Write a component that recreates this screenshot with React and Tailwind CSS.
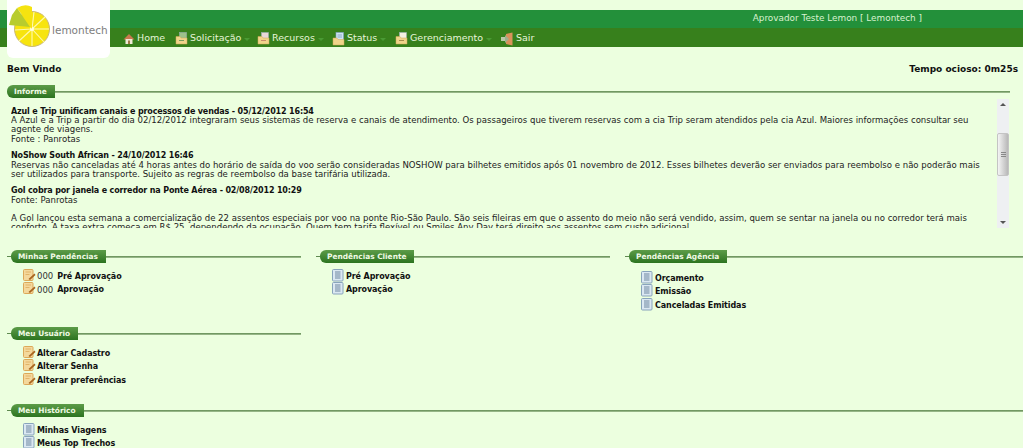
const FONT = 'font-["DejaVu_Sans",Verdana,sans-serif]';

const LemonLogo = () => (
  <svg width="50" height="50" viewBox="0 0 50 50" className="shrink-0">
    <circle cx="25" cy="25" r="17.5" fill="#f7e40e" stroke="#c9b878" strokeWidth="1" />
    <g stroke="#fff9b0" strokeWidth="1.1">
      <path d="M25 25 L27 8" />
      <path d="M25 25 L38 13" />
      <path d="M25 25 L42 25" />
      <path d="M25 25 L37 38" />
      <path d="M25 25 L25 42" />
      <path d="M25 25 L12 37" />
      <path d="M25 25 L8 26" />
    </g>
    <circle cx="25" cy="25" r="2" fill="#fffde0" />
    <path d="M25 25 L10 4 Q18 -1 25 3 Z" fill="#f5e310" />
    <path d="M23 23 L10 4 L5 11 L2 21 Z" fill="#b8cc2e" />
  </svg>
);

const HomeIcon = () => (
  <svg width="12" height="12" viewBox="0 0 12 12">
    <path d="M6 1 L11.5 6.5 H0.5 Z" fill="#c8794e" />
    <rect x="2.5" y="6" width="7" height="5" fill="#efe9d6" />
    <rect x="5" y="7.5" width="2" height="3.5" fill="#a07a48" />
  </svg>
);

const FolderIcon = ({ tab = '#dfe6ee', line = '#7a9a5a' }) => (
  <svg width="13" height="13" viewBox="0 0 13 13">
    <rect x="4.5" y="0.5" width="7" height="6" fill={tab} stroke="#9fb0bc" strokeWidth="0.5" />
    <path d="M1 4.5 H5 L6 6 H12 V12 H1 Z" fill="#f0d48a" stroke="#d3aa55" strokeWidth="0.5" />
    <path d="M4 8.5 L9 8.5" stroke={line} strokeWidth="1" />
  </svg>
);

const StatusIcon = () => (
  <svg width="13" height="14" viewBox="0 0 13 14">
    <rect x="4" y="0.5" width="7.5" height="8" fill="#cfe3f2" stroke="#7fa3c4" strokeWidth="0.6" />
    <path d="M5.5 3 H10 M5.5 5 H10" stroke="#6f93b5" strokeWidth="0.7" />
    <path d="M1 6 H5 L6 7.5 H12 V13 H1 Z" fill="#f0d48a" stroke="#d3aa55" strokeWidth="0.5" />
  </svg>
);

const SairIcon = () => (
  <svg width="14" height="14" viewBox="0 0 14 14">
    <path d="M6 2 L12.5 0.5 V13.5 L6 12 Z" fill="#d9925a" />
    <path d="M1 5 H6 V9 H1 Z" fill="#b9c9a8" />
    <path d="M5 3 L9 7 L5 11 Z" fill="#9db08c" />
  </svg>
);

const NoteIcon = () => (
  <svg width="13" height="13" viewBox="0 0 13 13" className="shrink-0 -mt-[3px]">
    <rect x="0.5" y="0.5" width="9.5" height="11" rx="1" fill="#f4d89c" stroke="#dca858" />
    <path d="M2.5 3 H8 M2.5 5.5 H6.5" stroke="#e2b469" />
    <path d="M5.5 10 L11.5 4.5 L12.5 6 L7 11 Z" fill="#a8641e" />
  </svg>
);

const ListIcon = () => (
  <svg width="13" height="13" viewBox="0 0 13 13" className="shrink-0 -mt-[3px]">
    <rect x="0.5" y="0.5" width="10.5" height="11.5" rx="1" fill="#dbe8f2" stroke="#88a4bc" />
    <path d="M3 3 H8.5 M3 5 H8.5 M3 7 H8.5 M3 9 H8.5" stroke="#6e87a0" />
  </svg>
);

const menu = [
  { label: 'Home', icon: <HomeIcon />, w: 'w-[52px]' },
  { label: 'Solicitação', icon: <FolderIcon tab="#9cc08a" />, caret: true, w: 'w-[82px]' },
  { label: 'Recursos', icon: <FolderIcon tab="#e8d8d8" line="#c98a6a" />, caret: true, w: 'w-[75px]' },
  { label: 'Status', icon: <StatusIcon />, caret: true, w: 'w-[63px]' },
  { label: 'Gerenciamento', icon: <FolderIcon tab="#f5f0e0" line="#a88a4a" />, caret: true, w: 'w-[105px]' },
  { label: 'Sair', icon: <SairIcon />, w: 'w-[50px]' },
];

const SectionTitle = ({ title, stub = true, className = '' }) => (
  <div className={`flex items-center h-[13px] ${className}`}>
    {stub && <div className="w-[4px] h-[1px] bg-[#5f8a50]" />}
    <div className="h-[13px] flex items-center pl-[7px] pr-[8px] rounded-l-[6px] bg-gradient-to-b from-[#5c9c48] to-[#2c7420] text-[7.4px] leading-none font-bold text-[#f0fae4] whitespace-nowrap">
      {title}
    </div>
    <div className="flex-1 h-[2px] bg-gradient-to-b from-[#5f8a50] to-[#a9c59a]" />
  </div>
);

const LinkList = ({ items, Icon, count, className = 'mt-[8px]' }) => (
  <div className={`flex flex-col gap-[2.7px] ${className} pl-[16px]`}>
    {items.map((item) => (
      <div key={item} className="flex items-center h-[11px] text-[8px] leading-none text-[#111]">
        <Icon />
        {count && <span className="ml-[1px] mr-[4px] text-[8.5px] font-normal text-[#333]">000</span>}
        <span className={`font-bold tracking-[-0.1px] ${count ? '' : 'ml-[1px]'}`}>{item}</span>
      </div>
    ))}
  </div>
);

const news = [
  {
    title: 'Azul e Trip unificam canais e processos de vendas - 05/12/2012 16:54',
    body: [
      'A Azul e a Trip a partir do dia 02/12/2012 integraram seus sistemas de reserva e canais de atendimento. Os passageiros que tiverem reservas com a cia Trip seram atendidos pela cia Azul. Maiores informações consultar seu agente de viagens.',
      'Fonte : Panrotas',
    ],
  },
  {
    title: 'NoShow South African - 24/10/2012 16:46',
    body: [
      'Reservas não canceladas até 4 horas antes do horário de saída do voo serão consideradas NOSHOW para bilhetes emitidos após 01 novembro de 2012. Esses bilhetes deverão ser enviados para reembolso e não poderão mais ser utilizados para transporte. Sujeito as regras de reembolso da base tarifária utilizada.',
    ],
  },
  {
    title: 'Gol cobra por janela e corredor na Ponte Aérea - 02/08/2012 10:29',
    body: [
      'Fonte: Panrotas',
      '',
      'A Gol lançou esta semana a comercialização de 22 assentos especiais por voo na ponte Rio-São Paulo. São seis fileiras em que o assento do meio não será vendido, assim, quem se sentar na janela ou no corredor terá mais conforto. A taxa extra começa em R$ 25, dependendo da ocupação. Quem tem tarifa flexível ou Smiles Any Day terá direito aos assentos sem custo adicional.',
    ],
  },
];

export default function App() {
  return (
    <div className={`relative h-[448px] overflow-hidden bg-[#ecffdf] text-[#111] ${FONT}`}>
      {/* Logo */}
      <div className="absolute left-[7px] top-0 w-[103px] h-[58px] bg-white rounded-b-[6px] z-10 flex items-center">
        <LemonLogo />
        <span className="text-[10.5px] leading-none text-[#7d7d7d] -ml-[5px] mt-[2px]">lemontech</span>
      </div>

      {/* Header */}
      <div className="pt-[10px]">
        <div className="h-[18px] bg-[#23903a] flex items-center justify-end pr-[101px] text-[8.9px] text-[#d9f2cf]">
          Aprovador Teste Lemon [ Lemontech ]
        </div>
        <div className="h-[19px] pt-[2px] bg-[#37801c] flex items-center pl-[123px] text-[9.5px] text-[#e6f5d8]">
          {menu.map((m) => (
            <div key={m.label} className={`flex items-center gap-[2px] ${m.w}`}>
              {m.icon}
              <span>{m.label}</span>
              {m.caret && <span className="ml-[1px] mt-[1px] border-x-[3px] border-t-[3px] border-x-transparent border-t-[#4a9a34]" />}
            </div>
          ))}
        </div>
      </div>

      {/* Title row */}
      <div className="flex justify-between items-center pl-[7px] pr-[5px] mt-[17px] h-[12px] text-[9px] font-bold text-[#111]">
        <span>Bem Vindo</span>
        <span>Tempo ocioso: 0m25s</span>
      </div>

      {/* Informe */}
      <SectionTitle title="Informe" stub={false} className="mt-[9px] ml-[7px] mr-[13px]" />
      <div className="flex h-[129px] mt-[1px] ml-[11px] mr-[14px] overflow-hidden">
        <div className="flex-1 pt-[8px] pr-[7px] text-[8.56px] leading-[9.2px] text-[#222]">
          {news.map((n) => (
            <div key={n.title} className="mb-[7.5px]">
              <div className="font-bold text-[8px] tracking-[-0.15px] text-[#111]">{n.title}</div>
              {n.body.map((line, i) => (
                <div key={i} className="min-h-[9.2px]">{line}</div>
              ))}
            </div>
          ))}
        </div>
        {/* Scrollbar */}
        <div className="w-[12px] h-[129px] bg-[#eef0f2] flex flex-col items-center justify-between py-[4px] relative shrink-0">
          <span className="border-x-[3px] border-b-[3px] border-x-transparent border-b-[#555]" />
          <div className="absolute top-[34px] left-0 w-[12px] h-[43px] rounded-[2px] bg-gradient-to-r from-[#f4f4f4] to-[#b8b8b8] border border-[#c4c4c4] flex flex-col items-center justify-center gap-[1px]">
            <span className="w-[5px] h-[1px] bg-[#888]" />
            <span className="w-[5px] h-[1px] bg-[#888]" />
            <span className="w-[5px] h-[1px] bg-[#888]" />
          </div>
          <span className="border-x-[3px] border-t-[3px] border-x-transparent border-t-[#555]" />
        </div>
      </div>

      {/* Pendencias */}
      <div className="grid grid-cols-[294px_294px_1fr] gap-x-[15px] ml-[7px] mt-[22px] h-[77px]">
        <div>
          <SectionTitle title="Minhas Pendências" />
          <LinkList items={['Pré Aprovação', 'Aprovação']} Icon={NoteIcon} count />
        </div>
        <div>
          <SectionTitle title="Pendências Cliente" />
          <LinkList items={['Pré Aprovação', 'Aprovação']} Icon={ListIcon} />
        </div>
        <div>
          <SectionTitle title="Pendências Agência" />
          <LinkList items={['Orçamento', 'Emissão', 'Canceladas Emitidas']} Icon={ListIcon} className="mt-[10px]" />
        </div>
      </div>

      <div className="w-[294px] ml-[7px] h-[77px]">
        <SectionTitle title="Meu Usuário" />
        <LinkList items={['Alterar Cadastro', 'Alterar Senha', 'Alterar preferências']} Icon={NoteIcon} />
      </div>

      <div className="ml-[7px]">
        <SectionTitle title="Meu Histórico" />
        <LinkList items={['Minhas Viagens', 'Meus Top Trechos']} Icon={ListIcon} />
      </div>
    </div>
  );
}
